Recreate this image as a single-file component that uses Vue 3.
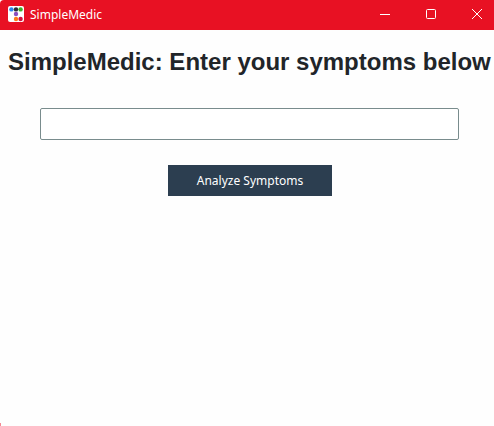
<script setup>
import { ref } from 'vue'

const symptoms = ref('')
const dots = [
  { x: 3.4, y: 3.4, color: '#2f86f0' },
  { x: 8, y: 3.4, color: '#2f2d38' },
  { x: 12.6, y: 3.4, color: '#3fae2a' },
  { x: 8, y: 8, color: '#8a4fc0' },
  { x: 8, y: 13, color: '#ff7a1a' },
  { x: 12.6, y: 13, color: '#d3123f' },
]
</script>

<template>
  <div class="window">
    <header class="titlebar">
      <svg class="logo" viewBox="0 0 16 16" aria-hidden="true">
        <rect width="16" height="16" rx="2" fill="#fff" />
        <circle v-for="(d, i) in dots" :key="i" :cx="d.x" :cy="d.y" r="2.2" :fill="d.color" />
      </svg>
      <span class="caption">SimpleMedic</span>
      <div class="controls">
        <button type="button" aria-label="Minimize">
          <svg viewBox="0 0 12 12"><path d="M1 6.5h10" /></svg>
        </button>
        <button type="button" aria-label="Maximize">
          <svg viewBox="0 0 12 12"><rect x="1.5" y="1.5" width="9" height="9" rx="1" /></svg>
        </button>
        <button type="button" aria-label="Close">
          <svg viewBox="0 0 12 12"><path d="M1 1l10 10M11 1L1 11" /></svg>
        </button>
      </div>
    </header>
    <main class="content">
      <h1><label for="symptoms">SimpleMedic: Enter your symptoms below</label></h1>
      <input id="symptoms" v-model="symptoms" class="field" type="text" />
      <button type="button" class="analyze">Analyze Symptoms</button>
    </main>
  </div>
</template>

<style>
body {
  background: #fefefe;
}
</style>

<style scoped>
.window {
  position: relative;
  display: flex;
  flex-direction: column;
  min-height: 100vh;
  font-family: "Noto Sans", "Open Sans", sans-serif;
}
/* window frame showing at the rounded bottom corner */
.window::after {
  content: "";
  position: absolute;
  left: 0;
  bottom: 0;
  width: 1px;
  height: 3px;
  background: #f58a94;
}
.titlebar {
  display: flex;
  align-items: center;
  box-sizing: border-box;
  height: 30px;
  padding: 0 0 2px 8px;
  background: #e81123;
  border-top-left-radius: 4px;
  color: #fff;
}
.logo {
  width: 16px;
  height: 16px;
  margin-right: 6px;
}
.caption {
  padding-top: 2px;
  font-size: 12px;
  line-height: 16px;
}
.controls {
  display: flex;
  margin-left: auto;
}
.controls button {
  display: flex;
  align-items: center;
  justify-content: center;
  width: 46px;
  height: 28px;
  padding: 0;
  border: 0;
  background: none;
}
.controls button:last-child {
  width: 40px;
  padding-left: 6px;
}
.controls svg {
  width: 12px;
  height: 12px;
  fill: none;
  stroke: #fff;
}
.content {
  display: flex;
  flex-direction: column;
  align-items: center;
  padding: 16px 0;
}
h1 {
  margin: 0;
  padding-left: 8px;
  align-self: flex-start;
  color: #212529;
  font: bold 24px/32px "Liberation Sans", Arial, sans-serif;
  white-space: nowrap;
}
.field {
  box-sizing: border-box;
  width: calc(100% - 75px);
  height: 32px;
  margin: 30px 35px 25px 40px;
  padding: 0 8px;
  border: 1px solid #798c8d;
  border-radius: 2px;
  background: #fff;
  font: 14px "Noto Sans", sans-serif;
}
.analyze {
  margin-left: 6px;
  padding: 1px 29px 0;
  border: 0;
  background: #2c3e50;
  color: #fff;
  font: 12px/30px "Noto Sans", "Open Sans", sans-serif;
}
</style>
